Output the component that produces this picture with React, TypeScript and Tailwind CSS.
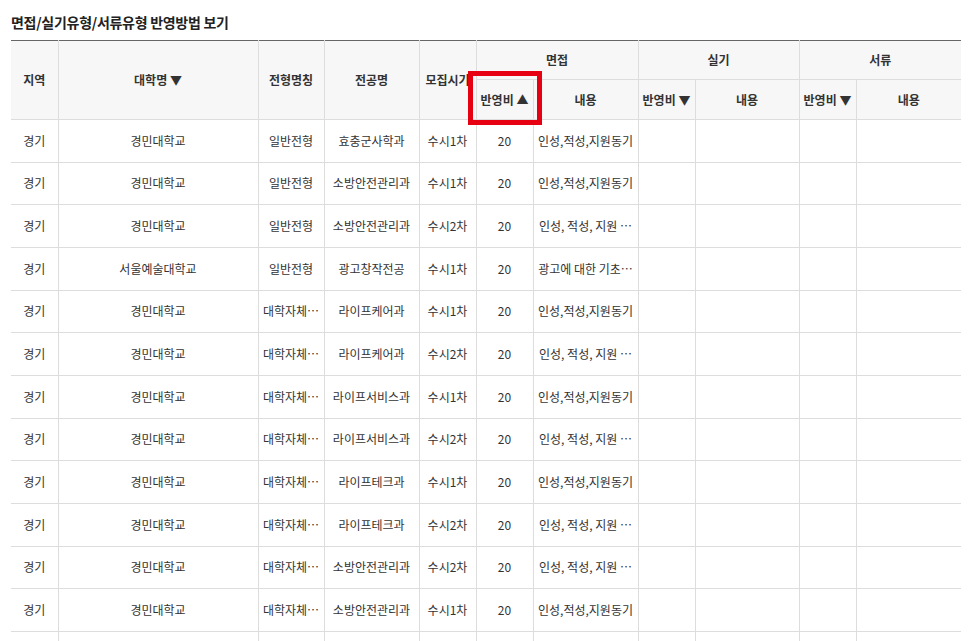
import React from "react"

type Row = {
  region: string
  univ: string
  type: string
  major: string
  period: string
  ratio: string
  content: string
}

// 목록 화면에서 잘려 보이는 값은 잘린 그대로 표시
const cut = "인성, 적성, 지원 …"
const full = "인성,적성,지원동기"

const rows: Row[] = [
  { region: "경기", univ: "경민대학교", type: "일반전형", major: "효충군사학과", period: "수시1차", ratio: "20", content: full },
  { region: "경기", univ: "경민대학교", type: "일반전형", major: "소방안전관리과", period: "수시1차", ratio: "20", content: full },
  { region: "경기", univ: "경민대학교", type: "일반전형", major: "소방안전관리과", period: "수시2차", ratio: "20", content: cut },
  { region: "경기", univ: "서울예술대학교", type: "일반전형", major: "광고창작전공", period: "수시1차", ratio: "20", content: "광고에 대한 기초…" },
  { region: "경기", univ: "경민대학교", type: "대학자체…", major: "라이프케어과", period: "수시1차", ratio: "20", content: full },
  { region: "경기", univ: "경민대학교", type: "대학자체…", major: "라이프케어과", period: "수시2차", ratio: "20", content: cut },
  { region: "경기", univ: "경민대학교", type: "대학자체…", major: "라이프서비스과", period: "수시1차", ratio: "20", content: full },
  { region: "경기", univ: "경민대학교", type: "대학자체…", major: "라이프서비스과", period: "수시2차", ratio: "20", content: cut },
  { region: "경기", univ: "경민대학교", type: "대학자체…", major: "라이프테크과", period: "수시1차", ratio: "20", content: full },
  { region: "경기", univ: "경민대학교", type: "대학자체…", major: "라이프테크과", period: "수시2차", ratio: "20", content: cut },
  { region: "경기", univ: "경민대학교", type: "대학자체…", major: "소방안전관리과", period: "수시2차", ratio: "20", content: cut },
  { region: "경기", univ: "경민대학교", type: "대학자체…", major: "소방안전관리과", period: "수시1차", ratio: "20", content: full },
  { region: "", univ: "", type: "", major: "", period: "", ratio: "", content: "" },
]

const th = "border-l border-b border-[#ddd] font-bold text-center whitespace-nowrap"
const td = "border-l border-b border-[#ddd] text-center whitespace-nowrap px-[2px]"

export default function App() {
  return (
    <div
      className="relative w-[974px] h-[641px] overflow-hidden bg-white text-[#333]"
      style={{ fontFamily: '"Noto Sans CJK KR", "Noto Sans", sans-serif' }}
    >
      <h2 className="pl-[11px] pt-[12px] h-[40px] text-[14px] leading-[20px] font-bold text-[#222] tracking-[-0.02em]">
        면접/실기유형/서류유형 반영방법 보기
      </h2>

      <table className="ml-[11px] w-[950px] table-fixed border-collapse border-t border-t-[#666] text-[12px]">
        <colgroup>
          <col className="w-[47px]" />
          <col className="w-[200px]" />
          <col className="w-[66px]" />
          <col className="w-[95px]" />
          <col className="w-[57px]" />
          <col className="w-[57px]" />
          <col className="w-[105px]" />
          <col className="w-[57px]" />
          <col className="w-[104px]" />
          <col className="w-[57px]" />
          <col className="w-[105px]" />
        </colgroup>
        <thead className="bg-[#f7f7f7] text-[#333]">
          <tr className="h-[39px]">
            <th rowSpan={2} className={th + " border-l-0"}>지역</th>
            <th rowSpan={2} className={th}>대학명 ▼</th>
            <th rowSpan={2} className={th}>전형명칭</th>
            <th rowSpan={2} className={th}>전공명</th>
            <th rowSpan={2} className={th}>모집시기</th>
            <th colSpan={2} className={th}>면접</th>
            <th colSpan={2} className={th}>실기</th>
            <th colSpan={2} className={th}>서류</th>
          </tr>
          <tr className="h-[40px]">
            <th className={th}>반영비 ▲</th>
            <th className={th}>내용</th>
            <th className={th}>반영비 ▼</th>
            <th className={th}>내용</th>
            <th className={th}>반영비 ▼</th>
            <th className={th}>내용</th>
          </tr>
        </thead>
        <tbody>
          {rows.map((r, i) => (
            <tr key={i} className="h-[42.67px]">
              <td className={td + " border-l-0"}>{r.region}</td>
              <td className={td}>{r.univ}</td>
              <td className={td}>{r.type}</td>
              <td className={td}>{r.major}</td>
              <td className={td}>{r.period}</td>
              <td className={td}>{r.ratio}</td>
              <td className={td}>{r.content}</td>
              <td className={td}></td>
              <td className={td}></td>
              <td className={td}></td>
              <td className={td}></td>
            </tr>
          ))}
        </tbody>
      </table>

      {/* 현재 정렬 기준 강조 */}
      <div className="absolute left-[468px] top-[71px] w-[74px] h-[54px] border-[5px] border-[#e60012] pointer-events-none" />
    </div>
  )
}
